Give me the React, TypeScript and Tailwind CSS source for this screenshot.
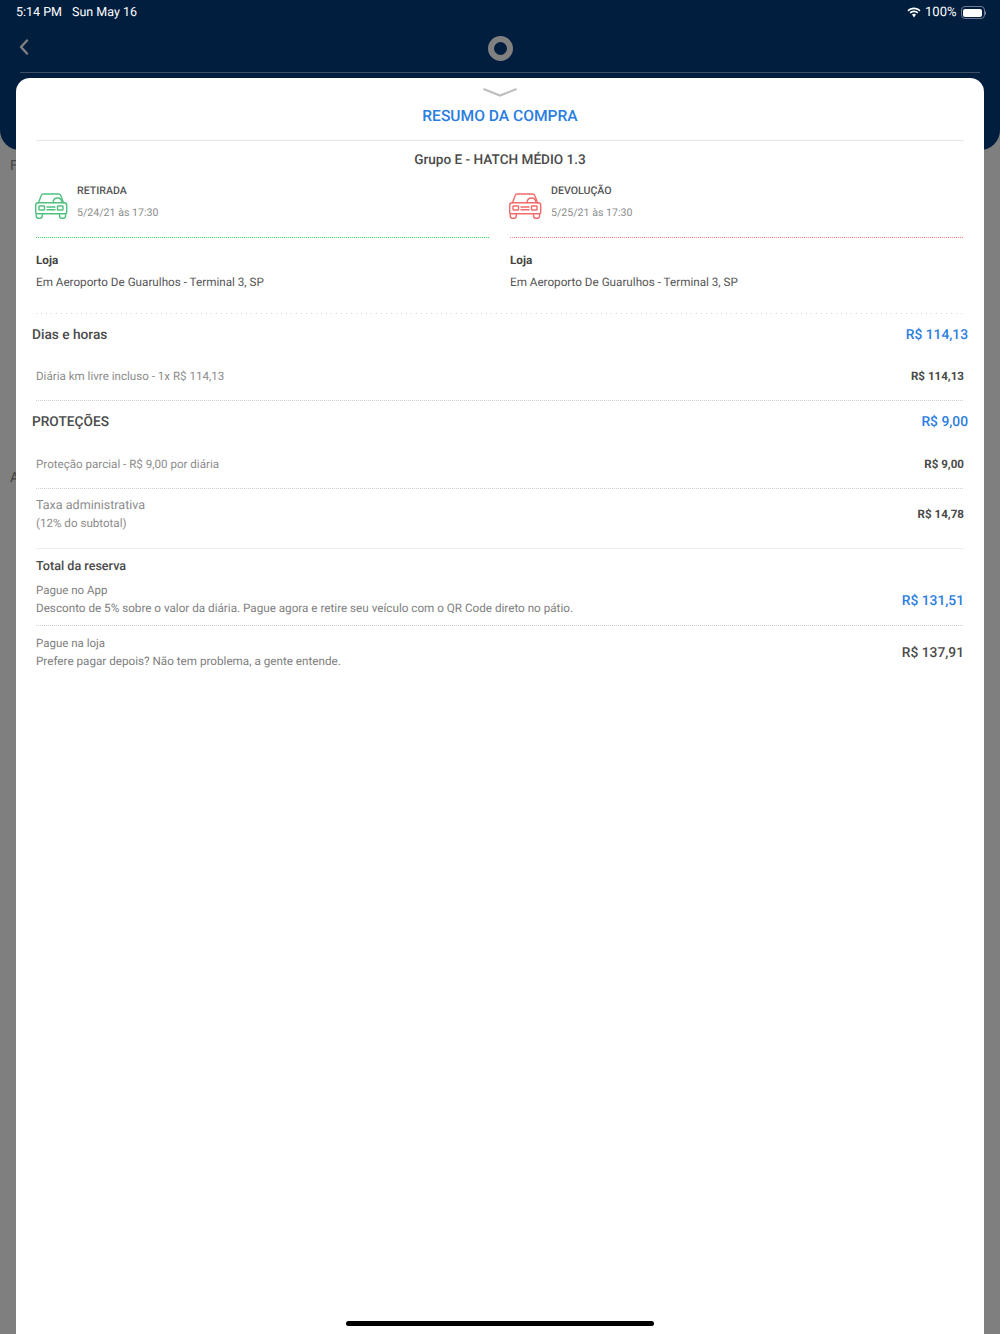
const font = { fontFamily: "Roboto, sans-serif" };

const CarIcon = ({ color }: { color: string }) => (
  <svg width="33" height="26" viewBox="0 0 33 26" fill="none" stroke={color} strokeWidth="1.4" strokeLinejoin="round" strokeLinecap="round" className="shrink-0 ml-[-1px]">
    <path d="M3.500 9.800 6 2.900C6.400 1.700 7.300 1 8.500 1h15c1.200 0 2.100.7 2.500 1.900l2.500 6.900" />
    <path d="M2.700 9.800h26.600c1.300 0 2.400 1.100 2.400 2.400v7.300c0 .7-.5 1.200-1.200 1.200H1.900c-.7 0-1.200-.5-1.200-1.200v-7.300c0-1.300 1.100-2.400 2.400-2.400Z" />
    <path d="M18 9.800c.2-2.900 2.200-4.800 4.500-4.800s4.300 1.900 4.500 4.800" />
    <rect x="4" y="13" width="5.500" height="4" rx="0.6" />
    <rect x="22.500" y="13" width="5.500" height="4" rx="0.6" />
    <path d="M12 14h8M12 16.700h8" />
    <path d="M1.200 20.700v2.400c0 1.200.9 2.100 2.100 2.100h1.900c1.200 0 2.100-.9 2.100-2.100v-2.400M24.500 20.700v2.400c0 1.200.9 2.100 2.100 2.100h1.900c1.200 0 2.100-.9 2.100-2.100v-2.400" />
  </svg>
);

const DotLine = () => (
  <div className="h-px bg-[repeating-linear-gradient(90deg,#cfcfcf_0,#cfcfcf_1px,transparent_1px,transparent_2px)]" />
);

const Leg = ({ label, date, pickup }: { label: string; date: string; pickup: boolean }) => (
  <div className="flex-1">
    <div className="flex gap-[9px] h-[68px]">
      <div className="pt-[24px]">
        <CarIcon color={pickup ? "#4fc17f" : "#f26a6a"} />
      </div>
      <div className="pt-[11px]">
        <div className="text-[10.6px] leading-[22px] font-medium text-[#555555]">{label}</div>
        <div className="text-[10.6px] leading-[22px] text-[#8c8c8c]">{date}</div>
      </div>
    </div>
    {pickup ? (
      <div className="h-px bg-[repeating-linear-gradient(90deg,#3ddc5a_0,#3ddc5a_1px,transparent_1px,transparent_2px)]" />
    ) : (
      <div className="h-px bg-[repeating-linear-gradient(90deg,#ff8585_0,#ff8585_1px,transparent_1px,transparent_2px)]" />
    )}
    <div className="text-[11.7px] leading-[22px] font-bold text-[#444444] mt-[11px]">Loja</div>
    <div className="text-[11.7px] leading-[22px] text-[#555555]">Em Aeroporto De Guarulhos - Terminal 3, SP</div>
  </div>
);

const SectionHead = ({ title, value, cls }: { title: string; value: string; cls: string }) => (
  <div className={`flex justify-between items-center mx-[-4px] ${cls}`}>
    <span className="text-[13.7px] leading-[20px] font-medium text-[#4a4a4a]">{title}</span>
    <span className="text-[13.800px] leading-[20px] font-medium text-[#2a7de1]">{value}</span>
  </div>
);

const PriceRow = ({ label, value, cls }: { label: string; value: string; cls: string }) => (
  <div className={`flex justify-between items-center ${cls}`}>
    <span className="text-[11.6px] leading-[18px] text-[#8c8c8c]">{label}</span>
    <span className="text-[11.6px] leading-[18px] font-bold text-[#4a4a4a]">{value}</span>
  </div>
);

const PayRow = ({ title, text, value, valueCls, cls }: { title: string; text: string; value: string; valueCls: string; cls: string }) => (
  <div className={`flex justify-between items-center ${cls}`}>
    <div>
      <div className="text-[11.5px] leading-[18px] text-[#808080]">{title}</div>
      <div className="text-[11.7px] leading-[18px] text-[#808080]">{text}</div>
    </div>
    <span className={`text-[13.800px] font-medium ${valueCls}`}>{value}</span>
  </div>
);

export default function App() {
  return (
    <div style={font} className="relative h-[1334px] w-[1000px] overflow-hidden bg-[#7f7f7f] [text-rendering:geometricPrecision]">
      <div className="h-[150px] bg-[#011e3f] rounded-b-[20px] px-[16px]">
        <div className="flex justify-between items-center h-[25px] text-white">
          <div className="flex gap-[10px] text-[12.5px] pt-[1px]">
            <span>5:14 PM</span>
            <span>Sun May 16</span>
          </div>
          <div className="flex items-center gap-[4px] mr-[-2px] text-[13px]">
            <svg width="14" height="11" viewBox="0 0 14 11" fill="white">
              <path d="M7 2.200c2.100 0 4 .8 5.400 2.200l1.100-1.200C11.800 1.500 9.500.5 7 .5S2.200 1.500.5 3.200l1.100 1.200C3 3 4.900 2.200 7 2.200Z" />
              <path d="M7 5.300c1.200 0 2.300.5 3.200 1.300l1.100-1.200C10.200 4.300 8.700 3.600 7 3.600s-3.200.7-4.300 1.800l1.100 1.200C4.700 5.800 5.800 5.300 7 5.300Z" />
              <path d="M7 6.800c-.8 0-1.500.3-2 .8L7 10.500l2-2.900c-.5-.5-1.200-.8-2-.8Z" />
            </svg>
            <span>100%</span>
            <div className="flex items-center">
              <div className="w-[24px] h-[13px] rounded-[4px] border border-[#6b7a90] p-[1.5px]">
                <div className="h-full rounded-[2px] bg-white" />
              </div>
              <div className="w-[1.5px] h-[4px] bg-[#6b7a90] rounded-r-sm" />
            </div>
          </div>
        </div>
        <div className="relative flex items-center justify-center h-[48px] mx-[4px] border-b border-[#3f4f66]">
          <svg width="10" height="16" viewBox="0 0 10 16" fill="none" stroke="#7f7f7f" strokeWidth="2.4" strokeLinecap="round" strokeLinejoin="round" className="absolute left-[-1px] top-[14px]">
            <path d="M8 1.500 2 8l6 6.500" />
          </svg>
          <div className="w-[25px] h-[25px] rounded-full border-[6px] border-[#808080]" />
        </div>
      </div>
      <div className="px-[10px] text-[14px] text-[#444444] leading-[20px] pt-[6px]">F</div>
      <div className="px-[10px] text-[14px] text-[#444444] leading-[20px] mt-[292px]">A</div>

      <div className="absolute left-[16px] right-[16px] top-[78px] bottom-0 bg-white rounded-t-[14px] px-[20px]">
        <div className="flex justify-center pt-[10px]">
          <svg width="34" height="9" viewBox="0 0 34 9" fill="none" stroke="#bfbfbf" strokeWidth="2.2">
            <path d="M0.500 1 17 7.500 33.500 1" />
          </svg>
        </div>
        <div className="text-center text-[15.6px] leading-[24px] font-medium text-[#2a7de1] mt-[7px] pb-[12px] border-b border-[#e6e6e6]">
          RESUMO DA COMPRA
        </div>
        <div className="text-center text-[13.6px] leading-[20px] font-medium text-[#4a4a4a] mt-[9px]">
          Grupo E - HATCH MÉDIO 1.3
        </div>
        <div className="flex gap-[20px] mt-[-1px]">
          <Leg label="RETIRADA" date="5/24/21 às 17:30" pickup />
          <Leg label="DEVOLUÇÃO" date="5/25/21 às 17:30" pickup={false} />
        </div>
        <div className="h-px mt-[20px] bg-[repeating-linear-gradient(90deg,#d4d4d4_0,#d4d4d4_1px,transparent_1px,transparent_5px)]" />
        <SectionHead title="Dias e horas" value="R$ 114,13" cls="mt-[11px]" />
        <PriceRow label="Diária km livre incluso - 1x R$ 114,13" value="R$ 114,13" cls="pt-[22px] pb-[15px]" />
        <DotLine />
        <SectionHead title="PROTEÇÕES" value="R$ 9,00" cls="mt-[11px]" />
        <PriceRow label="Proteção parcial - R$ 9,00 por diária" value="R$ 9,00" cls="pt-[23px] pb-[15px]" />
        <DotLine />
        <div className="flex justify-between items-center border-b border-[#eeeeee] pt-[8px] pb-[16px]">
          <div>
            <div className="text-[12.55px] leading-[17px] text-[#8c8c8c]">Taxa administrativa</div>
            <div className="text-[11.6px] leading-[18px] text-[#8c8c8c]">(12% do subtotal)</div>
          </div>
          <span className="text-[11.6px] font-bold text-[#4a4a4a]">R$ 14,78</span>
        </div>
        <div className="text-[12.6px] leading-[18px] font-medium text-[#4a4a4a] mt-[9px]">Total da reserva</div>
        <PayRow
          title="Pague no App"
          text="Desconto de 5% sobre o valor da diária. Pague agora e retire seu veículo com o QR Code direto no pátio."
          value="R$ 131,51"
          valueCls="text-[#2a7de1] mt-[4px]"
          cls="pt-[5px] pb-[8px]"
        />
        <DotLine />
        <PayRow
          title="Pague na loja"
          text="Prefere pagar depois? Não tem problema, a gente entende."
          value="R$ 137,91"
          valueCls="text-[#4a4a4a] mt-[3px]"
          cls="pt-[8px]"
        />
      </div>
      <div className="absolute left-[346px] bottom-[8px] w-[308px] h-[5px] rounded-full bg-black" />
    </div>
  );
}
